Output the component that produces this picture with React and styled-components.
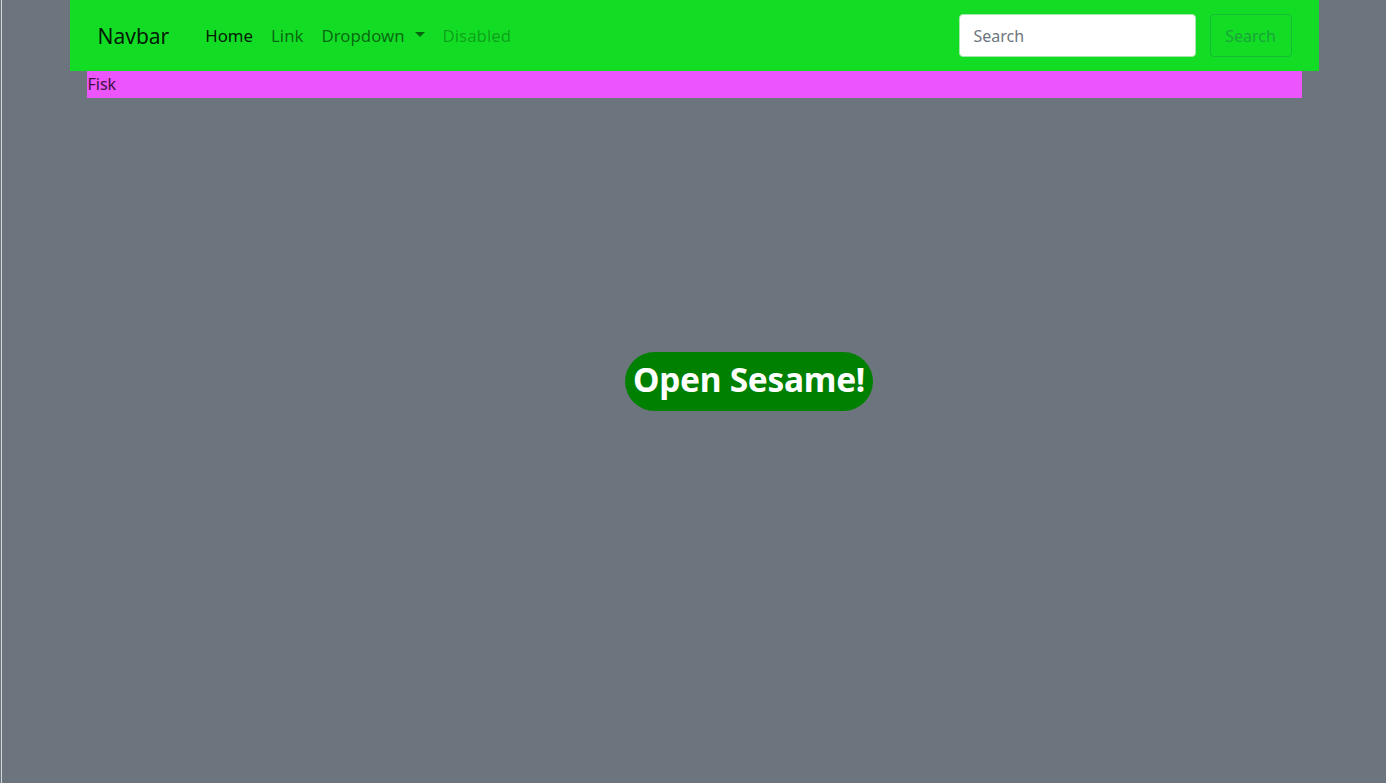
import styled, { createGlobalStyle } from "styled-components";

const GlobalStyle = createGlobalStyle`
  html, body {
    margin: 0;
    padding: 0;
    background: #6c757d;
  }
  body {
    font-family: "Noto Sans", "Open Sans", "Liberation Sans", sans-serif;
  }
`;

const Page = styled.div`
  margin-left: 1px;
  border-left: 1px solid #d5d8db;
  min-height: 100vh;
  background: #6c757d;
  display: flex;
  flex-direction: column;
  align-items: center;
`;

const Navbar = styled.nav`
  width: 1249px;
  height: 71px;
  box-sizing: border-box;
  background: #13dc25;
  display: flex;
  align-items: center;
  padding: 0 27px 0 28px;
`;

const Brand = styled.a`
  font-size: 21px;
  color: rgba(0, 0, 0, 0.9);
  margin-right: 36px;
  text-decoration: none;
`;

const NavList = styled.ul`
  display: flex;
  align-items: center;
  gap: 18px;
  list-style: none;
  margin: 0;
  padding: 0;
  flex: 1;
`;

const NavLink = styled.li`
  font-size: 16.8px;
  color: ${(p) =>
    p.$active ? "rgba(0,0,0,0.9)" : p.$disabled ? "rgba(0,0,0,0.28)" : "rgba(0,0,0,0.55)"};
  display: flex;
  align-items: center;
  gap: 10px;
`;

const Caret = styled.span`
  width: 0;
  height: 0;
  border-left: 5px solid transparent;
  border-right: 5px solid transparent;
  border-top: 5px solid rgba(0, 0, 0, 0.55);
  margin-top: -2px;
`;

const SearchForm = styled.form`
  display: flex;
  align-items: center;
  gap: 14px;
`;

const SearchInput = styled.input`
  width: 237px;
  height: 43px;
  box-sizing: border-box;
  border: 1px solid #a9e6ae;
  border-radius: 4px;
  background: #fff;
  padding: 0 14px;
  font-family: inherit;
  font-size: 16px;
  outline: none;
  &::placeholder {
    color: #6c757d;
  }
`;

const SearchButton = styled.button`
  width: 82px;
  height: 43px;
  box-sizing: border-box;
  background: transparent;
  border: 1px solid #17b935;
  border-radius: 4px;
  color: #1aa53a;
  font-family: inherit;
  font-size: 16px;
  padding: 0;
`;

const Strip = styled.div`
  width: 1215px;
  height: 27px;
  box-sizing: border-box;
  background: #ec55fb;
  color: #3c1142;
  font-size: 16px;
  line-height: 27px;
  padding-left: 1px;
`;

const Main = styled.main`
  align-self: stretch;
  padding: 254px 0 0 623px;
`;

const SesameButton = styled.button`
  height: 59px;
  box-sizing: border-box;
  padding: 0 8px 6px;
  background: #008000;
  color: #fff;
  border: none;
  border-radius: 30px;
  font-family: inherit;
  font-weight: 700;
  font-size: 33.5px;
  letter-spacing: -0.3px;
`;

export default function App() {
  return (
    <>
      <GlobalStyle />
      <Page>
        <Navbar>
          <Brand>Navbar</Brand>
          <NavList>
            <NavLink $active>Home</NavLink>
            <NavLink>Link</NavLink>
            <NavLink>
              Dropdown <Caret />
            </NavLink>
            <NavLink $disabled>Disabled</NavLink>
          </NavList>
          <SearchForm onSubmit={(e) => e.preventDefault()}>
            <SearchInput placeholder="Search" />
            <SearchButton type="button">Search</SearchButton>
          </SearchForm>
        </Navbar>
        <Strip>Fisk</Strip>
        <Main>
          <SesameButton>Open Sesame!</SesameButton>
        </Main>
      </Page>
    </>
  );
}
